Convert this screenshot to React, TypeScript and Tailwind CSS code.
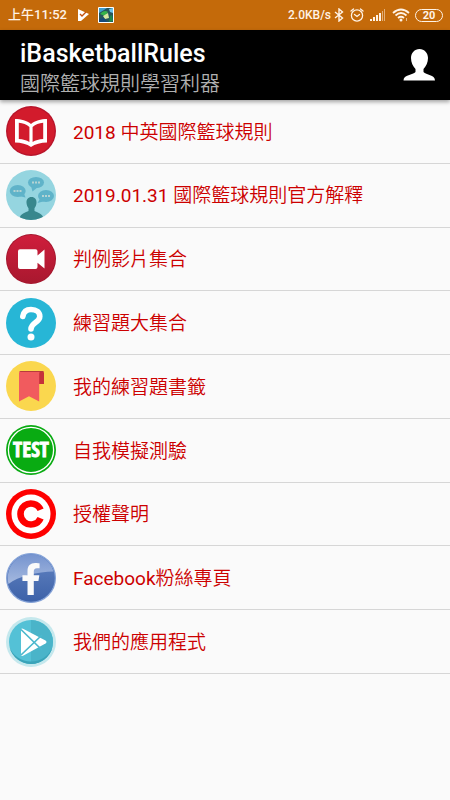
import React from "react"
import { FaFacebookF } from "react-icons/fa"

function BookIcon() {
  return (
    <svg viewBox="0 0 50 50" className="size-[50px] shrink-0" aria-hidden="true">
      <circle cx="25" cy="25" r="25" fill="#b8152b" />
      <circle cx="25" cy="25" r="23.6" fill="#d21b2c" />
      <path
        d="M9 13C15 13 21 14.5 25 18C29 14.5 35 13 41 13V36.5C35 36.5 29 38 25 41C21 38 15 36.5 9 36.5Z"
        fill="#fff"
      />
      <path
        d="M12.8 16.8C17 17.2 20.5 18.5 23.4 21V36C20.5 34.3 17 33.3 12.8 33Z"
        fill="#d21b2c"
      />
      <path
        d="M37.2 16.8C33 17.2 29.5 18.5 26.6 21V36C29.5 34.3 33 33.3 37.2 33Z"
        fill="#d21b2c"
      />
    </svg>
  )
}

function TalkIcon() {
  return (
    <svg viewBox="0 0 50 50" className="size-[50px] shrink-0" aria-hidden="true">
      <clipPath id="talk">
        <circle cx="25" cy="25" r="25" />
      </clipPath>
      <g clipPath="url(#talk)">
        <rect width="50" height="50" fill="#95d5e0" />
        <g fill="#5fb3c9">
          <ellipse cx="30" cy="12.5" rx="8" ry="5.6" />
          <path d="M25 16L26.5 21.5L32 17Z" />
          <ellipse cx="11.7" cy="21" rx="8" ry="6" />
          <path d="M13 26L19.5 27.5L17.5 22Z" />
          <ellipse cx="40" cy="26" rx="8" ry="6" />
          <path d="M34 28.5L31.5 33L39 31Z" />
        </g>
        <g fill="#b5d3d3">
          <path d="M26 11.5h2v2h-2zM29 11.5h2v2h-2zM32 11.5h2v2h-2z" />
          <path d="M7.5 20h2v2h-2zM10.5 20h2v2h-2zM13.5 20h2v2h-2z" />
          <path d="M36 25h2v2h-2zM39 25h2v2h-2zM42 25h2v2h-2z" />
        </g>
        <path
          d="M25.5 27C28.8 27 30.8 29.5 30.5 33C30.2 35.6 29.3 37.2 28.5 38.2V41C31 42.5 37 43 38 50H13C14 43 20 42.5 22.5 41V38.2C21.7 37.2 20.8 35.6 20.5 33C20.2 29.5 22.2 27 25.5 27Z"
          fill="#37878d"
        />
      </g>
    </svg>
  )
}

function VideoIcon() {
  return (
    <svg viewBox="0 0 50 50" className="size-[50px] shrink-0" aria-hidden="true">
      <defs>
        <linearGradient id="video" x1="0" y1="0" x2="0" y2="1">
          <stop offset="0" stopColor="#cf1e3c" />
          <stop offset="1" stopColor="#a9182f" />
        </linearGradient>
      </defs>
      <circle cx="25" cy="25" r="25" fill="#a5162d" />
      <circle cx="25" cy="25" r="24" fill="url(#video)" />
      <path
        d="M14 15.3H29.5Q31.5 15.3 31.5 17.3V21.5L38.5 15.5V34.5L31.5 28.7V33Q31.5 35 29.5 35H14Q12 35 12 33V17.3Q12 15.3 14 15.3Z"
        fill="#fff"
      />
    </svg>
  )
}

function QuestionIcon() {
  return (
    <svg viewBox="0 0 50 50" className="size-[50px] shrink-0" aria-hidden="true">
      <circle cx="25" cy="25" r="25" fill="#27b6d6" />
      <path
        d="M16.8 18.5C17.5 14 20.5 11.5 25 11.5C30.5 11.5 33.8 14.5 33.8 18.5C33.8 24.5 25 24.5 25 31"
        fill="none"
        stroke="#fff"
        strokeWidth="5.6"
        strokeLinecap="round"
      />
      <circle cx="25" cy="39" r="3.5" fill="#fff" />
    </svg>
  )
}

function BookmarkIcon() {
  return (
    <svg viewBox="0 0 50 50" className="size-[50px] shrink-0" aria-hidden="true">
      <circle cx="25" cy="25" r="25" fill="#fad74e" />
      <path d="M33 10H36Q38 10 38 12V23H33Z" fill="#c6303a" />
      <path
        d="M15 10H36C34 10 33.2 11 33.2 13V40.5L23 35.3L13 40.5V12Q13 10 15 10Z"
        fill="#f15b5e"
      />
      <path d="M15 10H36Q37.5 10 37.8 11H13.3Q13.8 10 15 10Z" fill="#b83a3d" />
    </svg>
  )
}

function TestIcon() {
  return (
    <svg viewBox="0 0 50 50" className="size-[50px] shrink-0" aria-hidden="true">
      <circle cx="25" cy="25" r="25" fill="#09ab12" />
      <circle cx="25" cy="25" r="22.6" fill="none" stroke="#fff" strokeWidth="1.3" />
      <text
        x="25"
        y="32"
        textAnchor="middle"
        fill="#fff"
        stroke="#fff"
        strokeWidth="0.8"
        fontSize="21"
        className="font-['Liberation_Sans_Narrow','Open_Sans_Condensed','DejaVu_Sans_Condensed',sans-serif] font-bold"
      >
        TEST
      </text>
    </svg>
  )
}

function CopyrightIcon() {
  return (
    <svg viewBox="0 0 50 50" className="size-[50px] shrink-0" aria-hidden="true">
      <circle cx="25" cy="25" r="25" fill="#fe0000" />
      <circle cx="25" cy="25" r="19.5" fill="#fff" />
      <path
        d="M34.6 20.8A10.5 10.5 0 1 0 34.6 29.2"
        fill="none"
        stroke="#fe0000"
        strokeWidth="6.6"
      />
    </svg>
  )
}

function FacebookIcon() {
  return (
    <svg viewBox="0 0 50 50" className="size-[50px] shrink-0" aria-hidden="true">
      <defs>
        <linearGradient id="fb" x1="0" y1="0" x2="0" y2="1">
          <stop offset="0" stopColor="#6486c6" />
          <stop offset="0.5" stopColor="#5073b5" />
          <stop offset="1" stopColor="#3c61a8" />
        </linearGradient>
        <linearGradient id="fbShine" x1="0" y1="0" x2="0" y2="1">
          <stop offset="0" stopColor="#7694cf" />
          <stop offset="1" stopColor="#a5b9df" />
        </linearGradient>
      </defs>
      <circle cx="25" cy="25" r="24.4" fill="url(#fb)" stroke="#85a3d8" strokeWidth="1.2" />
      <path
        d="M2.5 31A23.3 23.3 0 1 1 47.5 18.5C32 19 12 23 2.5 31Z"
        fill="url(#fbShine)"
      />
      <FaFacebookF x="9" y="10" width="32" height="32" size={32} color="#fafafa" />
    </svg>
  )
}

function PlayIcon() {
  return (
    <svg viewBox="0 0 50 50" className="size-[50px] shrink-0" aria-hidden="true">
      <circle cx="25" cy="25" r="25" fill="#c5e8ed" />
      <circle cx="25" cy="25" r="22" fill="#54c1d6" />
      <path d="M25 3A22 22 0 0 1 25 47Z" fill="#4ab4c9" />
      <path d="M3.6 30A22 22 0 0 0 46.4 30A22.5 21 0 0 1 3.6 30Z" fill="#3aa3b8" />
      <path
        d="M15 12.5Q15.5 11 17.5 12L39.5 23.5Q41.5 25 39.5 26.5L17.5 38.5Q15.5 39.5 15 38Z"
        fill="#fff"
      />
      <path
        d="M15 12.5L36 33M15 38L36 18"
        fill="none"
        stroke="#4cb8cd"
        strokeWidth="1.7"
      />
    </svg>
  )
}

const items = [
  { label: "2018 中英國際籃球規則", Icon: BookIcon },
  { label: "2019.01.31 國際籃球規則官方解釋", Icon: TalkIcon },
  { label: "判例影片集合", Icon: VideoIcon },
  { label: "練習題大集合", Icon: QuestionIcon },
  { label: "我的練習題書籤", Icon: BookmarkIcon },
  { label: "自我模擬測驗", Icon: TestIcon },
  { label: "授權聲明", Icon: CopyrightIcon },
  { label: "Facebook粉絲專頁", Icon: FacebookIcon },
  { label: "我們的應用程式", Icon: PlayIcon },
]

function StatusBar() {
  return (
    <div className="flex h-[30px] items-center justify-between bg-[#c46a0a] pr-[7px] pl-2 text-xs font-medium text-[#fff3e6]">
      <div className="flex items-center">
        <span className="text-[13px]">上午11:52</span>
        {/* play store update */}
        <svg viewBox="0 0 12 14" className="ml-[10px] h-[14px] w-3" aria-hidden="true">
          <path d="M1 1L12 6L4 13H1Z" fill="#fff" />
          <path d="M3 6L5 8L9 4" fill="none" stroke="#c4500a" strokeWidth="1.3" />
        </svg>
        {/* game notification */}
        <svg viewBox="0 0 16 16" className="ml-[9px] size-4" aria-hidden="true">
          <rect width="16" height="16" rx="1" fill="#fff" />
          <rect x="1" y="1" width="14" height="14" fill="#27565c" />
          <path d="M1 1H9L6 3L1 6Z" fill="#3f9fd0" />
          <path d="M2 7Q6 2 10 5L7 9Z" fill="#35b34a" />
          <path d="M5 9L10 6L11 11L7 12Z" fill="#d8e8a0" />
          <path d="M1 12L6 11L9 15H1Z" fill="#174a7a" />
          <path d="M11 2L15 1V6L12 5Z" fill="#6cc3e8" />
          <path d="M12 9L14 8L15 14L11 15Z" fill="#1e8a4c" />
        </svg>
      </div>
      <div className="flex items-center">
        <span>2.0KB/s</span>
        <svg viewBox="0 0 10 14" className="ml-[3px] h-[14px] w-[10px]" aria-hidden="true">
          <path
            d="M1 4L8.5 10L5 13V1L8.5 4L1 10"
            fill="none"
            stroke="currentColor"
            strokeWidth="1.4"
          />
        </svg>
        <svg viewBox="0 0 14 14" className="ml-[6px] size-[14px]" aria-hidden="true">
          <g fill="none" stroke="currentColor" strokeWidth="1.3" strokeLinecap="round">
            <circle cx="7" cy="7.5" r="5.6" />
            <path d="M4.5 6.5L7 8.5L9.5 6.5M1 3L3.5 1M13 3L10.5 1" />
          </g>
        </svg>
        <svg viewBox="0 0 16 12" className="ml-[6px] h-3 w-4" aria-hidden="true">
          <g fill="currentColor">
            <path d="M0 10h2v2H0zM3 8h2v4H3zM6 6h2v6H6zM9 4h2v8H9z" />
            <path d="M12 2h1v10h-1zM14 0h1v12h-1z" opacity="0.5" />
          </g>
        </svg>
        <svg viewBox="0 0 18 14" className="ml-[6px] h-[14px] w-[18px]" aria-hidden="true">
          <g fill="none" stroke="currentColor" strokeWidth="1.8">
            <path d="M1 5Q9 -2 17 5M3.5 7.5Q9 2.5 14.5 7.5M6 10Q9 7.5 12 10" />
          </g>
          <circle cx="9" cy="12" r="1.5" fill="currentColor" />
          <path d="M14 10h1v3h-1z" fill="currentColor" opacity="0.6" />
        </svg>
        <span className="ml-[5px] flex h-[13px] w-7 items-center justify-center rounded-full border border-current text-[11px] leading-none font-bold">
          20
        </span>
      </div>
    </div>
  )
}

export default function App() {
  return (
    <div className="min-h-screen bg-[#fafafa] font-[Roboto,'Noto_Sans_CJK_TC',sans-serif]">
      <StatusBar />
      <header className="flex h-[70px] items-center justify-between bg-black pr-[14px] pl-5 shadow-[0_2px_4px_rgba(0,0,0,0.35)]">
        <div className="pt-[7px]">
          <h1 className="text-[25px] leading-[30px] font-medium text-white">
            iBasketballRules
          </h1>
          <p className="text-xl leading-[30px] font-[350] text-[#b0b0b0]">
            國際籃球規則學習利器
          </p>
        </div>
        <button type="button" aria-label="Account">
          <svg viewBox="0 0 34 34" className="size-[34px]" aria-hidden="true">
            <path
              d="M17.5 1C22.5 1 26 5 26 10C26 14.5 24 18.5 21.5 21V24C24 27 33 26.5 33 32.5H1.5C1.5 26.5 11 27 13.5 24V21C11 18.5 9 14.5 9 10C9 5 12.5 1 17.5 1Z"
              fill="#fff"
            />
          </svg>
        </button>
      </header>
      <ul className="grid min-h-[574px] auto-rows-fr font-[Roboto,'Noto_Sans_CJK_TC_DemiLight','Noto_Sans_CJK_TC',sans-serif]">
        {items.map(({ label, Icon }) => (
          <li key={label} className="border-b border-[#d6d6d6]">
            <a
              href="#"
              className="flex h-full items-center gap-[17px] px-[6px] text-[19px] text-[#cc0000]"
            >
              <Icon />
              <span className="pt-[3px]">{label}</span>
            </a>
          </li>
        ))}
      </ul>
    </div>
  )
}
